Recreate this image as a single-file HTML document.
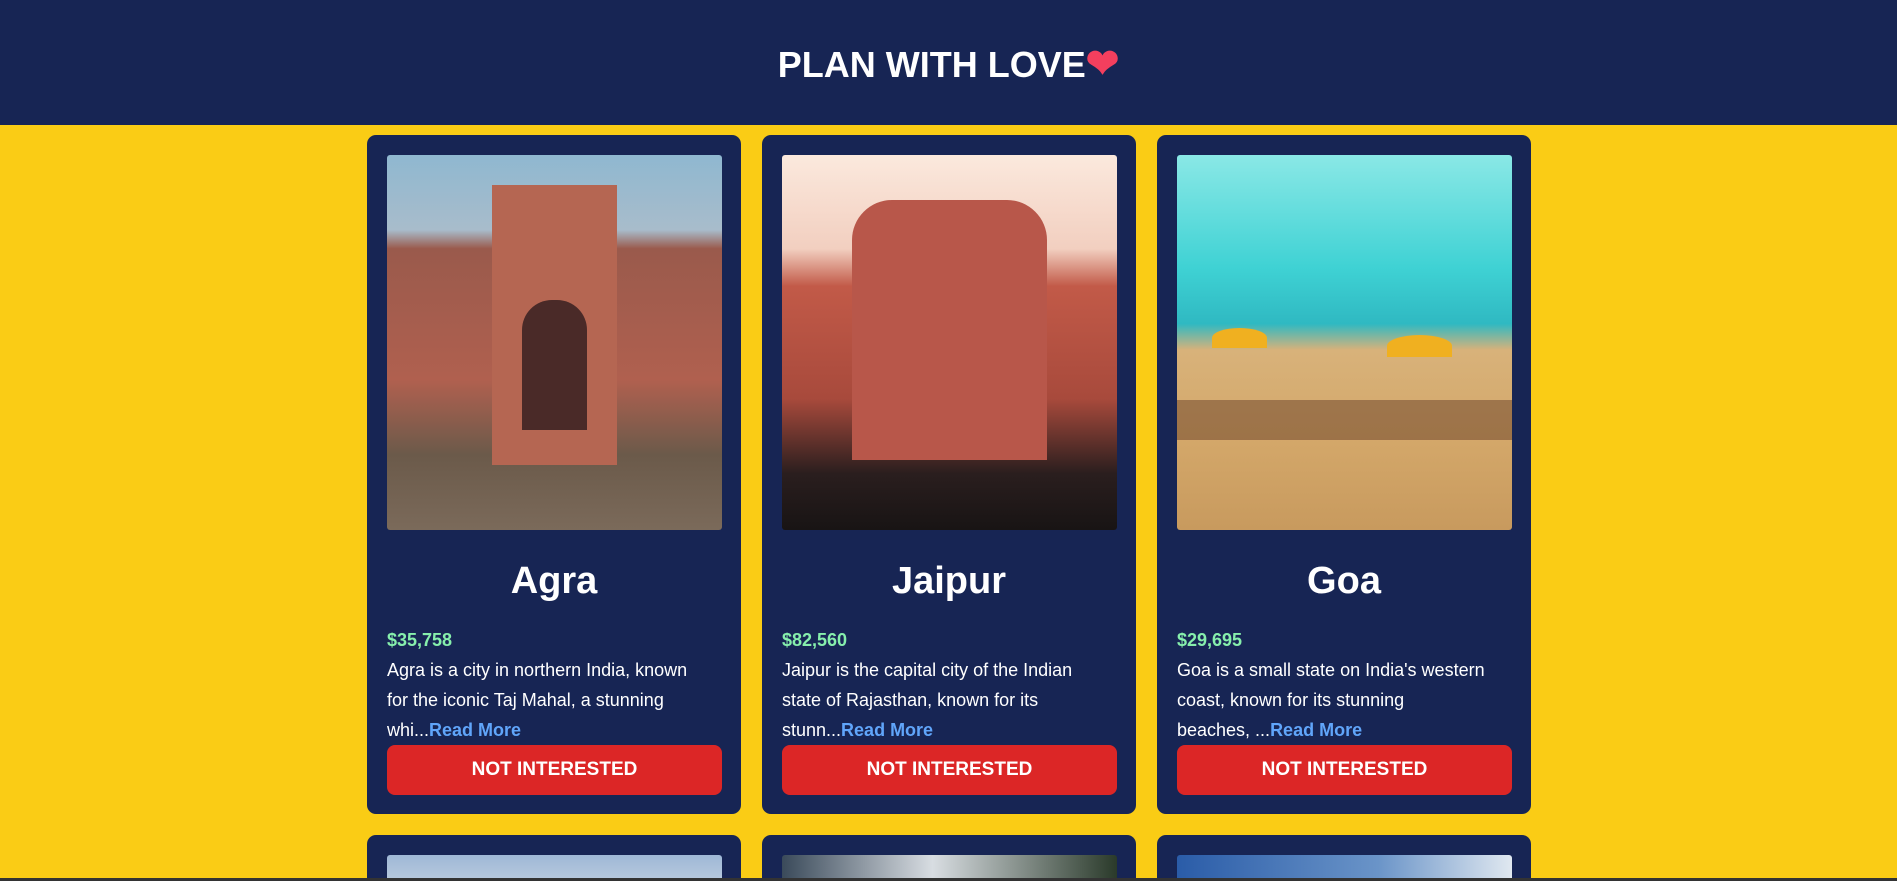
<!DOCTYPE html>
<html><head><meta charset="utf-8"><style>
*{margin:0;padding:0;box-sizing:border-box}
html,body{width:1897px;height:881px;overflow:hidden}
body{background:#facc15;font-family:"Liberation Sans",sans-serif;position:relative}
.hdr{position:absolute;left:0;top:0;width:1897px;height:125px;background:#172554;color:#fff;text-align:center}
.hdr h1{position:absolute;left:0;right:0;top:42px;font-size:36px;font-weight:bold;line-height:44px}
.card{position:absolute;width:374px;background:#172554;border-radius:9px;overflow:hidden}
.img{position:absolute;left:20px;top:20px;width:335px;height:375px;border-radius:3px;overflow:hidden}
.t{position:absolute;left:0;right:0;top:422px;text-align:center;color:#fff;font-size:38px;font-weight:bold;line-height:48px}
.p{position:absolute;left:20px;top:494px;color:#86efac;font-size:18px;font-weight:bold;line-height:22px}
.d{position:absolute;left:20px;top:520px;width:340px;color:#fff;font-size:18px;line-height:30px;white-space:nowrap}
.d b{color:#60a5fa}
.btn{position:absolute;left:20px;top:610px;width:335px;height:50px;border-radius:8px;background:#dc2626;color:#fff;font-size:19px;font-weight:bold;text-align:center;line-height:50px}
.bar{position:absolute;left:0;top:878px;width:1897px;height:3px;background:#333}
</style></head><body>
<div class="hdr"><h1>PLAN WITH LOVE<span style="color:#f43f5e;font-size:40px">&#10084;</span></h1></div>

<div class="card" style="left:367px;top:135px;height:679px">
<div class="img" style="background:linear-gradient(180deg,#8fb8d0 0%,#a8bccb 20%,#9a5a4c 25%,#b0604f 60%,#6b5a4a 80%,#7b6a5a 100%)">
<div style="position:absolute;left:105px;top:30px;width:125px;height:280px;background:#b56652"></div>
<div style="position:absolute;left:135px;top:145px;width:65px;height:130px;background:#4a2a28;border-radius:30px 30px 0 0"></div>
</div>
<div class="t">Agra</div>
<div class="p">$35,758</div>
<div class="d">Agra is a city in northern India, known<br>for the iconic Taj Mahal, a stunning<br>whi...<b>Read More</b></div>
<div class="btn">NOT INTERESTED</div>
</div>

<div class="card" style="left:762px;top:135px;height:679px">
<div class="img" style="background:linear-gradient(180deg,#fbe9dd 0%,#f2cfc0 25%,#c25a48 35%,#a84a3c 65%,#2a1e1e 85%,#181414 100%)">
<div style="position:absolute;left:70px;top:45px;width:195px;height:260px;background:#b8574a;border-radius:40px 40px 0 0"></div>
</div>
<div class="t">Jaipur</div>
<div class="p">$82,560</div>
<div class="d">Jaipur is the capital city of the Indian<br>state of Rajasthan, known for its<br>stunn...<b>Read More</b></div>
<div class="btn">NOT INTERESTED</div>
</div>

<div class="card" style="left:1157px;top:135px;height:679px">
<div class="img" style="background:linear-gradient(180deg,#8ae8e6 0%,#3fd2d4 30%,#2fb9c2 45%,#d8b27a 52%,#d4a86a 75%,#c89a5e 100%)">
<div style="position:absolute;left:35px;top:173px;width:55px;height:20px;background:#f0b020;border-radius:50% 50% 0 0"></div>
<div style="position:absolute;left:210px;top:180px;width:65px;height:22px;background:#f0b020;border-radius:50% 50% 0 0"></div>
<div style="position:absolute;left:0;top:245px;width:335px;height:40px;background:rgba(90,50,30,.45)"></div>
</div>
<div class="t">Goa</div>
<div class="p">$29,695</div>
<div class="d">Goa is a small state on India's western<br>coast, known for its stunning<br>beaches, ...<b>Read More</b></div>
<div class="btn">NOT INTERESTED</div>
</div>

<div class="card" style="left:367px;top:835px;height:46px;border-radius:9px 9px 0 0"><div class="img" style="height:40px;background:linear-gradient(180deg,#9fb8d6,#c4d2e2)"></div></div>
<div class="card" style="left:762px;top:835px;height:46px;border-radius:9px 9px 0 0"><div class="img" style="height:40px;background:linear-gradient(90deg,#3a4a5a,#d8dde2 45%,#2a3a2a)"></div></div>
<div class="card" style="left:1157px;top:835px;height:46px;border-radius:9px 9px 0 0"><div class="img" style="height:40px;background:linear-gradient(90deg,#2a5ca8,#6a94c8 60%,#e0e8f0)"></div></div>
<div class="bar"></div>
</body></html>
